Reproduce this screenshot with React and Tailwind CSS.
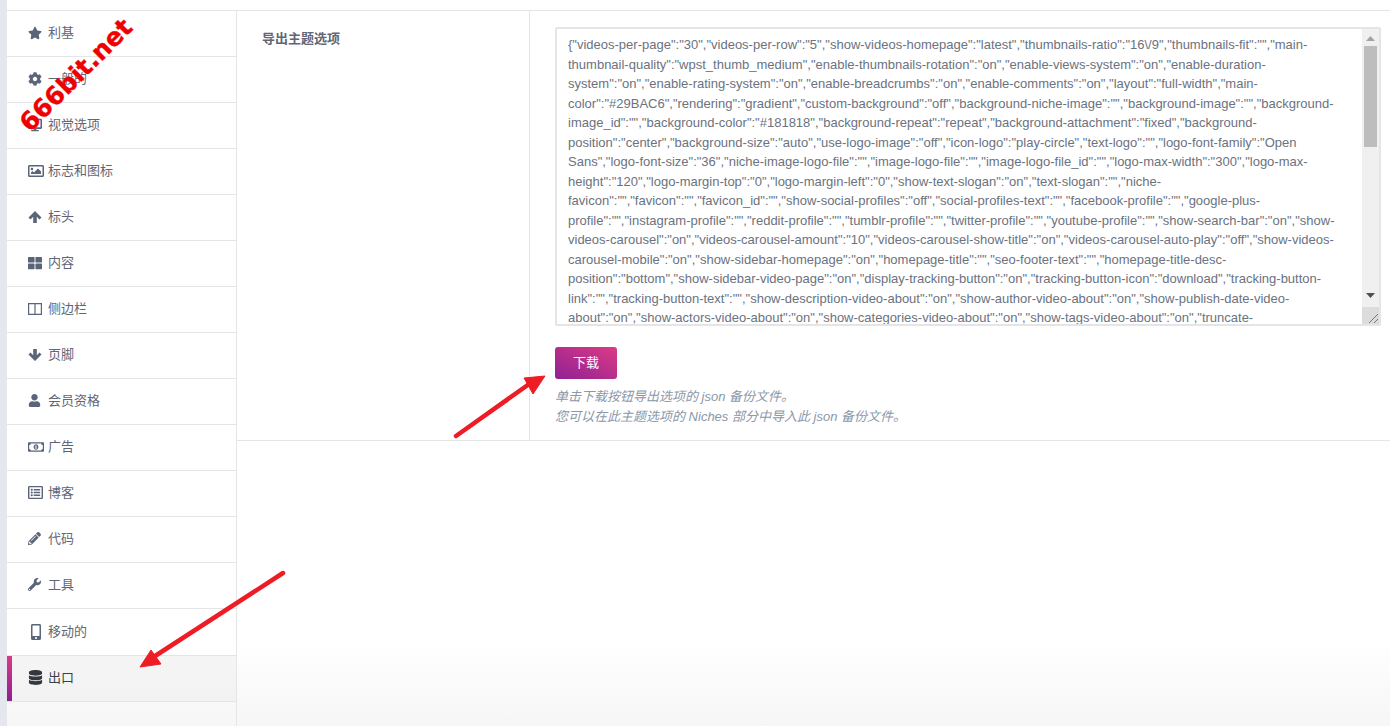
import React from "react";
import { FaStar, FaCog, FaDesktop, FaRegImage, FaThLarge, FaUser, FaRegMoneyBillAlt, FaRegListAlt, FaPencilAlt, FaWrench, FaMobileAlt, FaDatabase } from "react-icons/fa";

const ArrowUp = () => (
  <svg width="14" height="14" viewBox="0 0 14 14" fill="currentColor"><path d="M7 1 L13.5 7.5 L11.5 9.5 L8.8 6.8 V13 H5.2 V6.8 L2.5 9.5 L0.5 7.5 Z" /></svg>
);
const ArrowDown = () => (
  <svg width="14" height="14" viewBox="0 0 14 14" fill="currentColor"><path d="M7 13 L13.5 6.5 L11.5 4.5 L8.8 7.2 V1 H5.2 V7.2 L2.5 4.5 L0.5 6.5 Z" /></svg>
);
const Columns = () => (
  <svg width="14" height="12" viewBox="0 0 14 12" fill="none" stroke="currentColor" strokeWidth="1.2"><path d="M.6.6h12.8v10.8H.6zM7 .6v10.8" /></svg>
);

const items = [
  [FaStar, "利基", "h-[46px] pb-[2px]", "text-[14px]"],
  [FaCog, "一般的", "h-[46px] pb-[2px]", "text-[14px]"],
  [FaDesktop, "视觉选项", "h-[46px] pb-[2px]", "text-[14px]"],
  [FaRegImage, "标志和图标", "h-[46px] pb-[2px]", "text-[16px]"],
  [ArrowUp, "标头", "h-[46px] pb-[2px]", "text-[14px]"],
  [FaThLarge, "内容", "h-[46px] pb-[2px]", "text-[14px]"],
  [Columns, "侧边栏", "h-[46px] pb-[2px]", "text-[14px]"],
  [ArrowDown, "页脚", "h-[46px] pb-[2px]", "text-[14px]"],
  [FaUser, "会员资格", "h-[46px] pb-[2px]", "text-[13px]"],
  [FaRegMoneyBillAlt, "广告", "h-[46px] pb-[2px]", "text-[16px]"],
  [FaRegListAlt, "博客", "h-[46px] pb-[2px]", "text-[15px]"],
  [FaPencilAlt, "代码", "h-[46px] pb-[2px]", "text-[13px]"],
  [FaWrench, "工具", "h-[46px] pb-[2px]", "text-[13px]"],
  [FaMobileAlt, "移动的", "h-[47px] pb-0", "text-[16px]"],
];

const json = `{"videos-per-page":"30","videos-per-row":"5","show-videos-homepage":"latest","thumbnails-ratio":"16\\/9","thumbnails-fit":"","main-thumbnail-quality":"wpst_thumb_medium","enable-thumbnails-rotation":"on","enable-views-system":"on","enable-duration-system":"on","enable-rating-system":"on","enable-breadcrumbs":"on","enable-comments":"on","layout":"full-width","main-color":"#29BAC6","rendering":"gradient","custom-background":"off","background-niche-image":"","background-image":"","background-image_id":"","background-color":"#181818","background-repeat":"repeat","background-attachment":"fixed","background-position":"center","background-size":"auto","use-logo-image":"off","icon-logo":"play-circle","text-logo":"","logo-font-family":"Open Sans","logo-font-size":"36","niche-image-logo-file":"","image-logo-file":"","image-logo-file_id":"","logo-max-width":"300","logo-max-height":"120","logo-margin-top":"0","logo-margin-left":"0","show-text-slogan":"on","text-slogan":"","niche-favicon":"","favicon":"","favicon_id":"","show-social-profiles":"off","social-profiles-text":"","facebook-profile":"","google-plus-profile":"","instagram-profile":"","reddit-profile":"","tumblr-profile":"","twitter-profile":"","youtube-profile":"","show-search-bar":"on","show-videos-carousel":"on","videos-carousel-amount":"10","videos-carousel-show-title":"on","videos-carousel-auto-play":"off","show-videos-carousel-mobile":"on","show-sidebar-homepage":"on","homepage-title":"","seo-footer-text":"","homepage-title-desc-position":"bottom","show-sidebar-video-page":"on","display-tracking-button":"on","tracking-button-icon":"download","tracking-button-link":"","tracking-button-text":"","show-description-video-about":"on","show-author-video-about":"on","show-publish-date-video-about":"on","show-actors-video-about":"on","show-categories-video-about":"on","show-tags-video-about":"on","truncate-description":"on"}`;

const cjk = "font-['Liberation_Sans','Noto_Sans_CJK_SC',sans-serif]";

export default function App() {
  return (
    <div className={`relative flex h-[726px] w-[1390px] overflow-hidden bg-[linear-gradient(to_bottom,#ffffff_88%,#f6f6f6_100%)] ${cjk}`}>
      <div className="w-[7px] shrink-0 bg-[#e4e7ed]" />
      <div className="flex min-w-0 flex-1 flex-col">
        <div className="h-[11px] shrink-0 border-b border-[#e5e5e5] bg-white" />
        <div className="flex min-h-0 flex-1">
          <nav className="w-[230px] shrink-0 border-r border-[#e5e5e5]">
            {items.map(([Icon, label, h, size]) => (
              <div key={label} className={`flex ${h} items-center border-b border-[#e5e5e5] bg-white pl-[21px] text-[13px] text-[#5f6675]`}>
                <span className={`flex w-[20px] shrink-0 items-center justify-start ${size} text-[#5a6579]`}><Icon /></span>
                <span>{label}</span>
              </div>
            ))}
            <div className="flex h-[46px] items-center border-b border-[#e5e5e5] bg-[linear-gradient(to_bottom,#f5f5f5,#f2f2f2)]">
              <div className="h-full w-[5px] bg-[linear-gradient(to_bottom,#d93a86,#8f1f92)]" />
              <div className="flex items-center pb-[2px] pl-[16px] text-[13px] text-[#3a3f49]">
                <span className="flex w-[20px] shrink-0 text-[15px] text-[#33373f]"><FaDatabase /></span>
                <span>出口</span>
              </div>
            </div>
          </nav>
          <main className="min-w-0 flex-1">
            <div className="flex h-[430px] border-b border-[#e5e5e5] bg-white">
              <div className="w-[293px] shrink-0 border-r border-[#e5e5e5] pl-[25px] pt-[18px] text-[13px] font-bold leading-[19px] text-[#5f6675]">导出主题选项</div>
              <div className="min-w-0 flex-1 pl-[25px] pr-[9px] pt-[16px]">
                <div className="relative h-[299px] w-[826px]">
                  <textarea readOnly value={json} className="block h-full w-full resize-none overflow-hidden rounded-[2px] border-2 border-[#e5e5e5] bg-white pb-[8px] pl-[11px] pr-[28px] pt-[6px] text-[13px] leading-[19.5px] text-[#6b7280] outline-none" />
                  <div className="absolute bottom-[2px] right-[2px] top-[2px] flex w-[17px] flex-col items-center bg-[#f0f0f0]">
                    <svg className="mt-[7px] shrink-0" width="9" height="5" viewBox="0 0 9 5" fill="#a3a3a3"><path d="M4.5 0 9 5H0z" /></svg>
                    <div className="mt-[5px] h-[101px] w-[13px] shrink-0 bg-[#bdbdbd]" />
                    <svg className="mt-[146px] shrink-0" width="9" height="5" viewBox="0 0 9 5" fill="#505050"><path d="M0 0h9L4.5 5z" /></svg>
                    <div className="mt-auto flex h-[17px] w-full items-end justify-end bg-[#dcdcdc]">
                      <svg width="11" height="11" viewBox="0 0 11 11" stroke="#777" fill="none"><path d="M1 10 10 1M6 10l4-4" /></svg>
                    </div>
                  </div>
                </div>
                <button className="mt-[21px] block h-[32px] w-[62px] rounded-[3px] bg-[linear-gradient(to_top_right,#8f2194,#dc3b85)] text-[13px] text-white">下载</button>
                <p className="mt-[8px] text-[13px] italic leading-[20px] text-[#8c97a8]">单击下载按钮导出选项的 json 备份文件。<br />您可以在此主题选项的 Niches 部分中导入此 json 备份文件。</p>
              </div>
            </div>
          </main>
        </div>
      </div>

      <svg className="pointer-events-none absolute left-0 top-0" width="1390" height="726" fill="none">
        <path d="M456 436 L532 382" stroke="#ee1c25" strokeWidth="4.5" strokeLinecap="round" />
        <path d="M545 376 L524 378 L533 394 Z" fill="#ee1c25" stroke="#ee1c25" strokeWidth="1" />
        <path d="M283 573 L152 658" stroke="#ee1c25" strokeWidth="4.5" strokeLinecap="round" />
        <path d="M140 667 L151 650 L161 664 Z" fill="#ee1c25" stroke="#ee1c25" strokeWidth="1" />
      </svg>
      <div className="pointer-events-none absolute left-[76px] top-[75px] -translate-x-1/2 -translate-y-1/2 -rotate-[45deg] whitespace-nowrap font-['DejaVu_Sans',sans-serif] text-[25px] font-bold leading-none text-[#f00000] [-webkit-text-stroke:0.4px_#f00000]">666bit.net</div>
    </div>
  );
}
